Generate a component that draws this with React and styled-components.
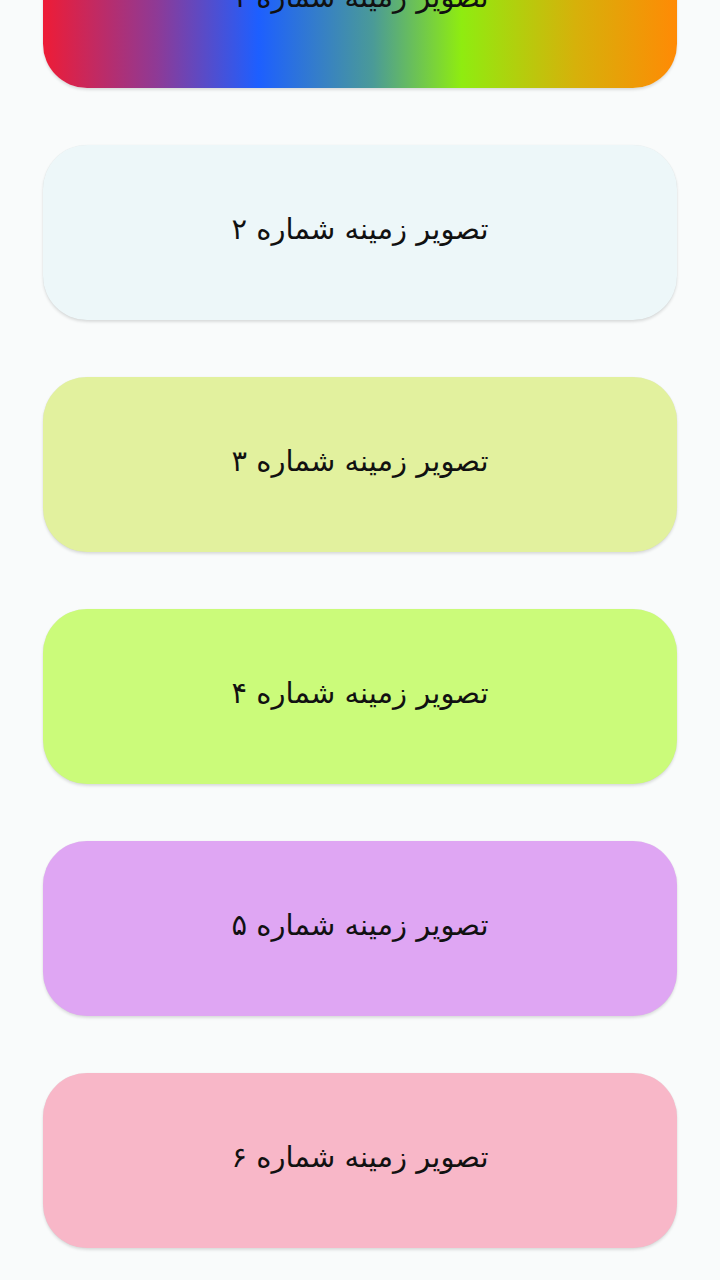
import React from "react";
import styled, { createGlobalStyle } from "styled-components";

const Global = createGlobalStyle`
  html, body { margin: 0; padding: 0; background: #f9fbfb; }
  body { font-family: "DejaVu Sans", "Noto Sans", sans-serif; }
`;

const List = styled.div`
  display: flex;
  flex-direction: column;
  gap: 57px;
  padding: 0 43px 40px 43px;
  margin-top: -87px;
`;

const Card = styled.div`
  height: 175px;
  border-radius: 44px;
  background: ${(p) => p.$bg};
  display: flex;
  align-items: center;
  justify-content: center;
  box-shadow: 0 2px 3px rgba(0, 0, 0, 0.12), 0 0 1px rgba(0, 0, 0, 0.08);
`;

const Label = styled.span`
  direction: rtl;
  font-family: "DejaVu Serif", "DejaVu Sans", serif;
  font-size: 29px;
  color: #111;
  margin-top: -8px;
`;

const cards = [
  { n: "۱", bg: "linear-gradient(90deg, #ee1c36 0%, #8e3a96 18%, #1d5fff 34%, #4a9a98 52%, #8fec10 66%, #d6b10a 84%, #ff8a05 100%)" },
  { n: "۲", bg: "#edf7f9" },
  { n: "۳", bg: "#e2f19e" },
  { n: "۴", bg: "#cbfb7a" },
  { n: "۵", bg: "#dfa6f3" },
  { n: "۶", bg: "#f8b7c8" },
];

export default function App() {
  return (
    <>
      <Global />
      <List>
        {cards.map((c) => (
          <Card key={c.n} $bg={c.bg}>
            <Label>تصویر زمینه شماره {c.n}</Label>
          </Card>
        ))}
      </List>
    </>
  );
}
